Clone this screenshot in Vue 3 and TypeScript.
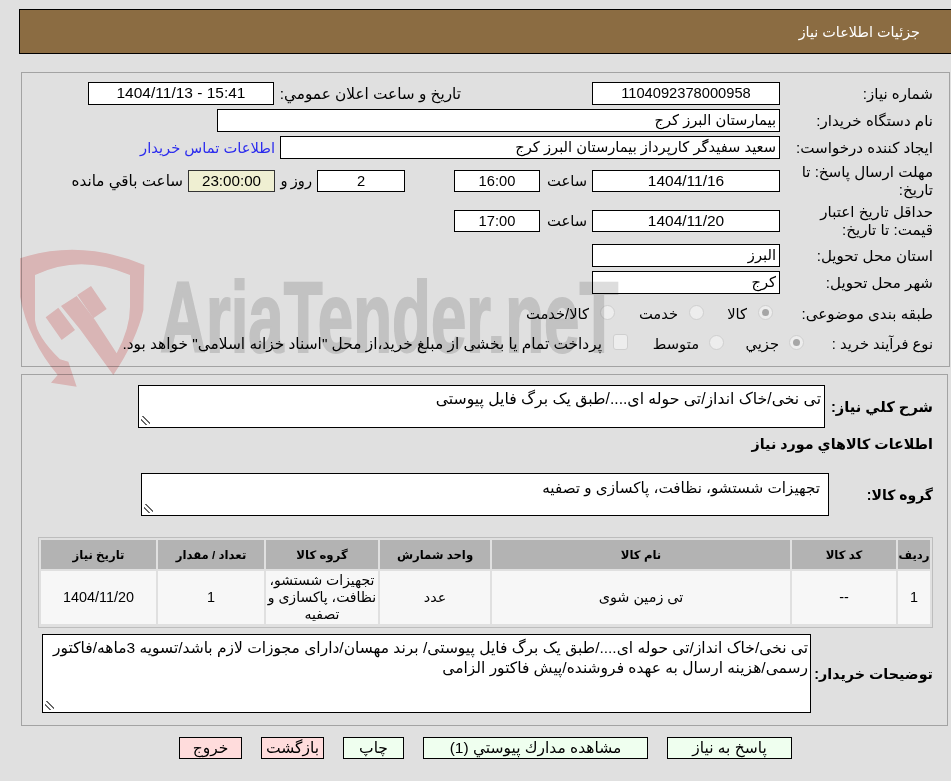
<script setup lang="ts">
const columns = [
  { title: 'ردیف', width: 32 },
  { title: 'کد کالا', width: 104 },
  { title: 'نام کالا', width: 298 },
  { title: 'واحد شمارش', width: 110 },
  { title: 'گروه کالا', width: 112 },
  { title: 'تعداد / مقدار', width: 106 },
  { title: 'تاریخ نیاز', width: 115 },
]
const buttons = [
  { label: 'پاسخ به نیاز', width: 125, tone: 'go' },
  { label: 'مشاهده مدارك پيوستي (1)', width: 225, tone: 'go' },
  { label: 'چاپ', width: 61, tone: 'go' },
  { label: 'بازگشت', width: 63, tone: 'stop' },
  { label: 'خروج', width: 63, tone: 'stop' },
]
</script>

<template>
  <div class="page" dir="rtl">
    <header class="banner">جزئیات اطلاعات نیاز</header>

    <section class="panel first">
      <div class="row">
        <span class="label">شماره نیاز:</span>
        <span class="box main center">1104092378000958</span>
        <span class="label-auto a1">تاریخ و ساعت اعلان عمومي:</span>
        <span class="box pub center date" dir="ltr">1404/11/13 - 15:41</span>
      </div>
      <div class="row">
        <span class="label">نام دستگاه خریدار:</span>
        <span class="box buyer">بیمارستان البرز کرج</span>
      </div>
      <div class="row">
        <span class="label">ایجاد کننده درخواست:</span>
        <span class="box creator">سعید سفیدگر کارپرداز بیمارستان البرز کرج</span>
        <a class="link">اطلاعات تماس خریدار</a>
      </div>
      <div class="row tall r3">
        <span class="label">مهلت ارسال پاسخ: تا تاریخ:</span>
        <span class="box main center date">1404/11/16</span>
        <span class="label-auto hour">ساعت</span>
        <span class="box time center">16:00</span>
        <span class="box days center">2</span>
        <span class="label-auto dayword">روز و</span>
        <span class="box clock center">23:00:00</span>
        <span class="label-auto left">ساعت باقي مانده</span>
      </div>
      <div class="row tall r4">
        <span class="label">حداقل تاریخ اعتبار قیمت: تا تاریخ:</span>
        <span class="box main center date">1404/11/20</span>
        <span class="label-auto hour">ساعت</span>
        <span class="box time center">17:00</span>
      </div>
      <div class="row r5">
        <span class="label">استان محل تحویل:</span>
        <span class="box main">البرز</span>
      </div>
      <div class="row">
        <span class="label">شهر محل تحویل:</span>
        <span class="box main">کرج</span>
      </div>
      <div class="row choice c1">
        <span class="label">طبقه بندی موضوعی:</span>
        <span class="radio on"></span><span class="opt w1">کالا</span>
        <span class="radio"></span><span class="opt w2">خدمت</span>
        <span class="radio"></span><span class="opt">کالا/خدمت</span>
      </div>
      <div class="row choice c2">
        <span class="label">نوع فرآیند خرید :</span>
        <span class="radio on"></span><span class="opt w3">جزیي</span>
        <span class="radio"></span><span class="opt w4">متوسط</span>
        <span class="check"></span>
        <span class="opt long">پرداخت تمام یا بخشی از مبلغ خرید،از محل "اسناد خزانه اسلامی" خواهد بود.</span>
      </div>
    </section>

    <section class="panel second">
      <div class="row desc">
        <b class="label strong">شرح کلي نیاز:</b>
        <div class="area a-desc">تی نخی/خاک انداز/تی حوله ای..../طبق یک برگ فایل پیوستی</div>
      </div>
      <h2 class="subtitle">اطلاعات کالاهاي مورد نیاز</h2>
      <div class="row group">
        <b class="label strong">گروه کالا:</b>
        <div class="area a-group">تجهیزات شستشو، نظافت، پاکسازی و تصفیه</div>
      </div>
      <div class="table">
        <div class="tr">
          <div v-for="c in columns" :key="c.title" class="th" :style="{ width: c.width + 'px' }">{{ c.title }}</div>
        </div>
        <div class="tr body">
          <div class="td" :style="{ width: columns[0].width + 'px' }">1</div>
          <div class="td" :style="{ width: columns[1].width + 'px' }">--</div>
          <div class="td" :style="{ width: columns[2].width + 'px' }">تی زمین شوی</div>
          <div class="td" :style="{ width: columns[3].width + 'px' }">عدد</div>
          <div class="td tight" :style="{ width: columns[4].width + 'px' }">تجهیزات شستشو، نظافت، پاکسازی و تصفیه</div>
          <div class="td" :style="{ width: columns[5].width + 'px' }">1</div>
          <div class="td" :style="{ width: columns[6].width + 'px' }">1404/11/20</div>
        </div>
      </div>
      <div class="row notes">
        <b class="label strong">توضیحات خریدار:</b>
        <div class="area a-notes">تی نخی/خاک انداز/تی حوله ای..../طبق یک برگ فایل پیوستی/ برند مهسان/دارای مجوزات لازم باشد/تسویه 3ماهه/فاکتور رسمی/هزینه ارسال به عهده فروشنده/پیش فاکتور الزامی</div>
      </div>
    </section>

    <nav class="actions">
      <button v-for="b in buttons" :key="b.label" class="btn" :class="b.tone" :style="{ width: b.width + 'px' }">{{ b.label }}</button>
    </nav>

    <svg class="mark" width="300" height="150" viewBox="0 0 900 450" aria-hidden="true">
      <path d="M15 55 Q195 -5 388 75 L385 210 Q365 300 295 405 L195 268 L138 198 L185 168 L240 240 L305 340 Q345 265 345 200 L345 105 Q195 40 60 105 L60 240 Q65 290 135 358 L160 365 L185 440 L108 428 L128 405 Q40 300 15 170 Z" />
      <path d="M92 232 L130 203 L180 270 L140 300 Z" />
      <path d="M187 165 L228 138 L275 207 L235 235 Z" />
    </svg>
    <div class="wordmark" dir="ltr">AriaTender.neT</div>
  </div>
</template>

<style>
html, body { margin: 0; background: #e0e0e0; }
</style>

<style scoped>
.page {
  position: relative;
  width: 951px;
  height: 781px;
  overflow: hidden;
  box-sizing: border-box;
  padding-top: 9px;
  background: #e0e0e0;
  color: #000;
  font: 14.7px/18px "Liberation Sans", "DejaVu Sans", sans-serif;
}
.mark {
  position: absolute;
  left: 15px;
  top: 240px;
  fill: #f7cece;
  mix-blend-mode: multiply;
  pointer-events: none;
}
.wordmark {
  position: absolute;
  left: 160px;
  top: 267px;
  color: #dddddd;
  -webkit-text-stroke: 2px #dddddd;
  font: bold 100px/100px "Liberation Sans", sans-serif;
  transform: scaleX(0.636);
  transform-origin: left top;
  white-space: nowrap;
  mix-blend-mode: multiply;
  pointer-events: none;
}
.banner {
  box-sizing: border-box;
  height: 45px;
  width: 932px;
  padding: 13px 31px 0 0;
  background: #8b6c42;
  border: 1px solid #000;
  border-right: 0;
  color: #fff;
  font-size: 14.4px;
}
.panel {
  box-sizing: border-box;
  border: 1px solid #a3a3a3;
}
.first { width: 929px; height: 295px; margin: 18px 1px 0 0; padding: 9px 16px 0 0; }
.second { width: 927px; height: 352px; margin: 7px 3px 0 0; padding: 10px 14px 0 0; }
.row { display: flex; align-items: center; height: 23px; margin-bottom: 4px; }
.label { box-sizing: border-box; flex: 0 0 153px; padding-left: 6px; font-size: 15.1px; }
.strong { padding-left: 0; font-size: 14.3px; font-weight: bold; white-space: nowrap; }
.desc .strong { font-size: 14.7px; }
.label-auto { flex: none; white-space: nowrap; }
.box {
  flex: none;
  box-sizing: border-box;
  height: 23px;
  padding: 1px 3px 0;
  background: #fff;
  border: 1px solid #000;
  white-space: nowrap;
}
.center { text-align: center; }
.date { font-size: 15.5px; }
.main { width: 188px; }
.a1 { margin-right: 131px; width: 187px; font-size: 15.3px; }
.pub { width: 186px; }
.buyer { width: 563px; }
.creator { width: 500px; }
.link { margin-right: 5px; color: #2a2aee; white-space: nowrap; }
.tall { height: 34px; margin-bottom: 0; }
.tall .box { height: 22px; }
.r3 { margin-top: 5px; }
.r4 { margin-top: 6px; }
.r5 { margin-top: 6px; }
.hour { margin-right: 5px; width: 47px; }
.time { width: 86px; }
.days { width: 88px; margin-right: 49px; }
.dayword { margin-right: 5px; width: 37px; word-spacing: -1px; }
.clock { width: 87px; background: #efefd2; border-color: #333; font-size: 15.2px; }
.left { margin-right: 5px; font-size: 15.2px; }
.choice { height: 20px; margin-bottom: 0; }
.c1 { margin-top: 10px; }
.c2 { margin-top: 10px; }
.c2 .label { flex-basis: 129px; font-size: 14.7px; }
.radio {
  flex: none;
  position: relative;
  top: -2px;
  box-sizing: border-box;
  width: 15px;
  height: 15px;
  margin-left: 11px;
  border-radius: 50%;
  background: #ededed;
  border: 1px solid #cfcfcf;
}
.c1 .radio.on { margin-right: 7px; }
.radio.on::after {
  content: "";
  position: absolute;
  inset: 3px;
  border-radius: 50%;
  background: #a6a6a6;
}
.c2 .radio { margin-left: 10px; }
.check {
  flex: none;
  position: relative;
  top: -2px;
  box-sizing: border-box;
  width: 15px;
  height: 16px;
  margin-left: 11px;
  border-radius: 3px;
  background: #ededed;
  border: 1px solid #cfcfcf;
}
.opt { flex: none; white-space: nowrap; }
.long { font-size: 15.4px; }
.w1 { width: 20px; margin-left: 23px; }
.w2 { width: 39px; margin-left: 24px; }
.w3 { width: 35px; margin-left: 20px; }
.w4 { width: 44px; margin-left: 27px; }
.area {
  position: relative;
  flex: none;
  box-sizing: border-box;
  background: #fff;
  border: 1px solid #000;
  line-height: 17px;
  padding: 4px 3px 0 4px;
}
.area::after {
  content: "";
  position: absolute;
  left: 2px;
  bottom: 2px;
  width: 9px;
  height: 9px;
  background: linear-gradient(45deg, transparent 25%, #666 25% 35%, transparent 35% 55%, #666 55% 65%, transparent 65%);
}
.desc { height: 43px; margin: 0; }
.desc .label { flex-basis: 108px; }
.a-desc { width: 687px; height: 43px; font-size: 15.7px; }
.subtitle { margin: 7px 0 0; font-size: 14.3px; line-height: 18px; font-weight: bold; }
.group { height: 43px; margin: 20px 0 0; }
.group .label { flex-basis: 104px; font-size: 14px; }
.a-group { width: 688px; height: 43px; padding: 5px 8px 0 4px; font-size: 15.2px; }
.table {
  box-sizing: border-box;
  width: 895px;
  height: 91px;
  margin-top: 21px;
  padding: 2px;
  border: 1px solid #bdbdbd;
  display: flex;
  flex-direction: column;
  gap: 2px;
}
.tr { display: flex; gap: 2px; height: 29px; }
.tr.body { height: 53px; }
.th, .td {
  flex: none;
  box-sizing: border-box;
  display: flex;
  align-items: center;
  justify-content: center;
  text-align: center;
}
.th { background: #b3b3b3; font-size: 11.7px; font-weight: bold; }
.td { background: #f7f7f7; font-size: 14.4px; line-height: 17px; }
.td.tight { font-size: 14px; }
.notes { height: 79px; margin: 6px 0 0; }
.notes .label { flex-basis: 122px; }
.a-notes { width: 769px; height: 79px; padding: 3px 2px 0 8px; line-height: 20px; font-size: 15.5px; }
.actions {
  display: flex;
  gap: 19px;
  margin: 11px 159px 0 0;
}
.btn {
  box-sizing: border-box;
  height: 22px;
  padding: 0;
  font: 15.5px "Liberation Sans", "DejaVu Sans", sans-serif;
  color: #000;
  border: 1px solid #000;
}
.go { background: #efffef; }
.stop { background: #ffdcdc; }
</style>
